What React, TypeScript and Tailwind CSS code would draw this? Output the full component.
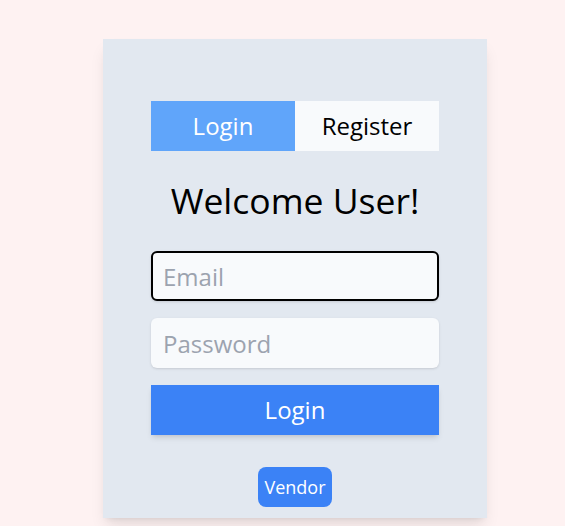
export default function App() {
  return (
    <div className="min-h-[526px] w-full bg-[#fef2f2] pt-[39px]" style={{ fontFamily: '"Open Sans", "Noto Sans", sans-serif' }}>
      <div className="ml-[103px] flex h-[479px] w-96 flex-col bg-[#e2e8f0] px-12 pt-[62px] shadow-lg">
        <div className="flex h-[50px] w-full">
          <button className="flex-1 bg-[#60a5fa] text-2xl text-white">Login</button>
          <button className="flex-1 bg-[#f8fafc] text-2xl text-black">Register</button>
        </div>
        <h1 className="mt-[29px] text-center text-[35.5px] leading-[40px] text-black">Welcome User!</h1>
        <input
          className="mt-[31px] h-[50px] w-full rounded-md border-2 border-black bg-[#f8fafc] px-[10px] text-2xl text-black placeholder:text-[#9ca3af] shadow-sm outline-none"
          placeholder="Email"
        />
        <input
          className="mt-[17px] h-[50px] w-full rounded-md bg-[#f8fafc] px-3 text-2xl text-black placeholder:text-[#9ca3af] shadow-sm outline-none"
          placeholder="Password"
        />
        <button className="mt-[17px] h-[50px] w-full bg-[#3b82f6] text-2xl text-white shadow-md">Login</button>
        <div className="mt-8 flex justify-center">
          <button className="h-10 w-[74px] rounded-lg bg-[#3b82f6] text-[18px] text-white">Vendor</button>
        </div>
      </div>
    </div>
  );
}
